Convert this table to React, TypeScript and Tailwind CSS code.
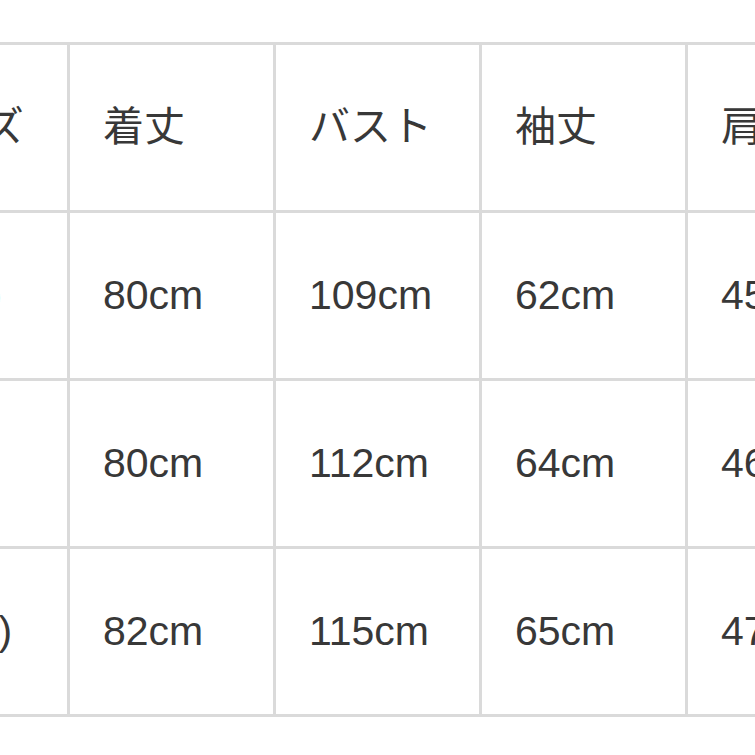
const header = ["サイズ", "着丈", "バスト", "袖丈", "肩幅"];

const rows = [
  ["M (S)", "80cm", "109cm", "62cm", "45cm"],
  ["L", "80cm", "112cm", "64cm", "46cm"],
  ["XL (L)", "82cm", "115cm", "65cm", "47cm"],
];

function Cell({ text, first }: { text: string; first?: boolean }) {
  return (
    <div
      className={`flex h-[168px] items-center overflow-hidden whitespace-nowrap border-r-[3px] border-b-[3px] border-[#dadada] text-[41px] leading-none text-[#383838] ${
        first ? "pl-[38px]" : "pl-[33px]"
      }`}
    >
      {text}
    </div>
  );
}

export default function App() {
  return (
    <div
      className="h-[755px] w-[755px] overflow-hidden bg-white"
      style={{ fontFamily: '"Liberation Sans", "Noto Sans CJK JP", sans-serif' }}
    >
      <div className="ml-[-139px] mt-[42px] grid w-[1033px] grid-cols-[repeat(5,206px)] border-t-[3px] border-l-[3px] border-[#dadada]">
        {header.map((h, j) => (
          <Cell key={h} text={h} first={j === 0} />
        ))}
        {rows.map((r, i) => r.map((c, j) => <Cell key={`${i}-${j}`} text={c} first={j === 0} />))}
      </div>
    </div>
  );
}
